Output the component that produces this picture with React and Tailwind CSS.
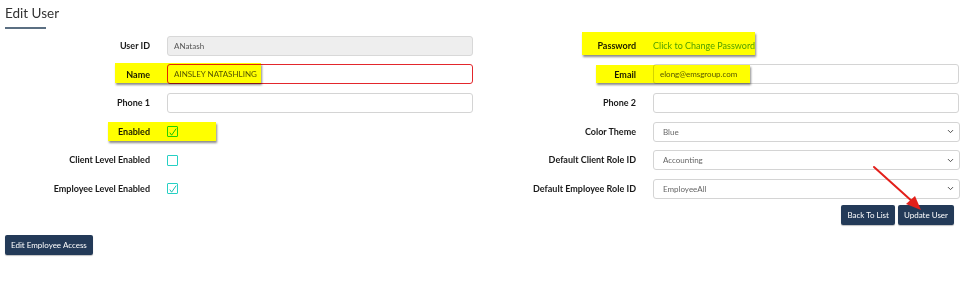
import { ChevronDown } from "lucide-react";

const font = { fontFamily: "Lato, 'Open Sans', sans-serif" };

function Label({ children }) {
  return (
    <div className="w-[150px] shrink-0 text-right text-[9px] font-bold text-[#1a1a1a]">{children}</div>
  );
}

function TextInput({ value, disabled, invalid }) {
  return (
    <div
      className={
        "flex h-[20px] w-[306px] items-center rounded-[3px] border px-[6px] text-[8px] text-[#555] " +
        (disabled ? "border-[#d8d8d8] bg-[#eeeeee]" : invalid ? "border-[#e3262c] bg-white" : "border-[#d4d4d4] bg-white")
      }
    >
      {value}
    </div>
  );
}

function Select({ value }) {
  return (
    <div className="flex h-[20px] w-[307px] items-center justify-between rounded-[3px] border border-[#d4d4d4] bg-white pr-[4px] pl-[9px] text-[8px] text-[#666]">
      <span>{value}</span>
      <ChevronDown className="h-[9px] w-[9px] text-[#444]" strokeWidth={2.5} />
    </div>
  );
}

function Check({ checked }) {
  return (
    <span className="inline-flex h-[11px] w-[11px] items-center justify-center rounded-[1px] border border-[#26d0c4] bg-white">
      {checked && (
        <svg width="8" height="8" viewBox="0 0 8 8">
          <path d="M0.8 4.6 L2.6 7.2 L7.2 0.6" fill="none" stroke="#1fbfb2" strokeWidth="1" />
        </svg>
      )}
    </span>
  );
}

function Row({ label, children }) {
  return (
    <div className="flex h-[28.6px] items-center gap-[17px]">
      <Label>{label}</Label>
      {children}
    </div>
  );
}

function Button({ children }) {
  return (
    <button className="h-[20px] rounded-[2px] bg-[#233a58] px-[6px] text-[8px] text-white shadow-[0_1px_1px_rgba(0,0,0,0.25)]">
      {children}
    </button>
  );
}

function Highlight({ className }) {
  return (
    <div
      className={
        "pointer-events-none absolute bg-[#ffff00] mix-blend-multiply shadow-[1px_2px_2px_rgba(0,0,0,0.45)] " + className
      }
    />
  );
}

export default function App() {
  return (
    <div className="relative h-[300px] w-[977px] bg-white" style={font}>
      <div className="px-[5px] pt-[5px]">
        <h1 className="text-[13.5px] leading-[17px] text-[#333]">Edit User</h1>
        <div className="mt-[5px] h-[1.5px] w-[41px] bg-[#5b6f82]" />
      </div>

      <div className="mt-[3px] grid grid-cols-[486px_486px]">
        <div>
          <Row label="User ID">
            <TextInput value="ANatash" disabled />
          </Row>
          <Row label="Name">
            <TextInput value="AINSLEY NATASHLING" invalid />
          </Row>
          <Row label="Phone 1">
            <TextInput value="" />
          </Row>
          <Row label="Enabled">
            <Check checked />
          </Row>
          <Row label="Client Level Enabled">
            <Check />
          </Row>
          <Row label="Employee Level Enabled">
            <Check checked />
          </Row>
        </div>
        <div>
          <Row label="Password">
            <span className="text-[9px] text-[#4f9f58]">Click to Change Password</span>
          </Row>
          <Row label="Email">
            <TextInput value="elong@emsgroup.com" />
          </Row>
          <Row label="Phone 2">
            <TextInput value="" />
          </Row>
          <Row label="Color Theme">
            <Select value="Blue" />
          </Row>
          <Row label="Default Client Role ID">
            <Select value="Accounting" />
          </Row>
          <Row label="Default Employee Role ID">
            <Select value="EmployeeAll" />
          </Row>
          <div className="mt-[2px] flex w-[468px] justify-end gap-[3px]">
            <Button>Back To List</Button>
            <Button>Update User</Button>
          </div>
        </div>
      </div>

      <div className="mt-[5px] px-[5px]">
        <Button>Edit Employee Access</Button>
      </div>

      <Highlight className="top-[63px] left-[115px] h-[20px] w-[146px]" />
      <Highlight className="top-[32px] left-[582px] h-[23px] w-[173px]" />
      <Highlight className="top-[65px] left-[596px] h-[18px] w-[154px]" />
      <Highlight className="top-[122px] left-[108px] h-[19px] w-[108px]" />

      <svg className="pointer-events-none absolute top-0 left-0" width="977" height="300">
        <line x1="874" y1="167" x2="914" y2="203" stroke="#e3201b" strokeWidth="2" strokeLinecap="round" />
        <polygon points="921,210 906,204 915,196" fill="#e3201b" />
      </svg>
    </div>
  );
}
